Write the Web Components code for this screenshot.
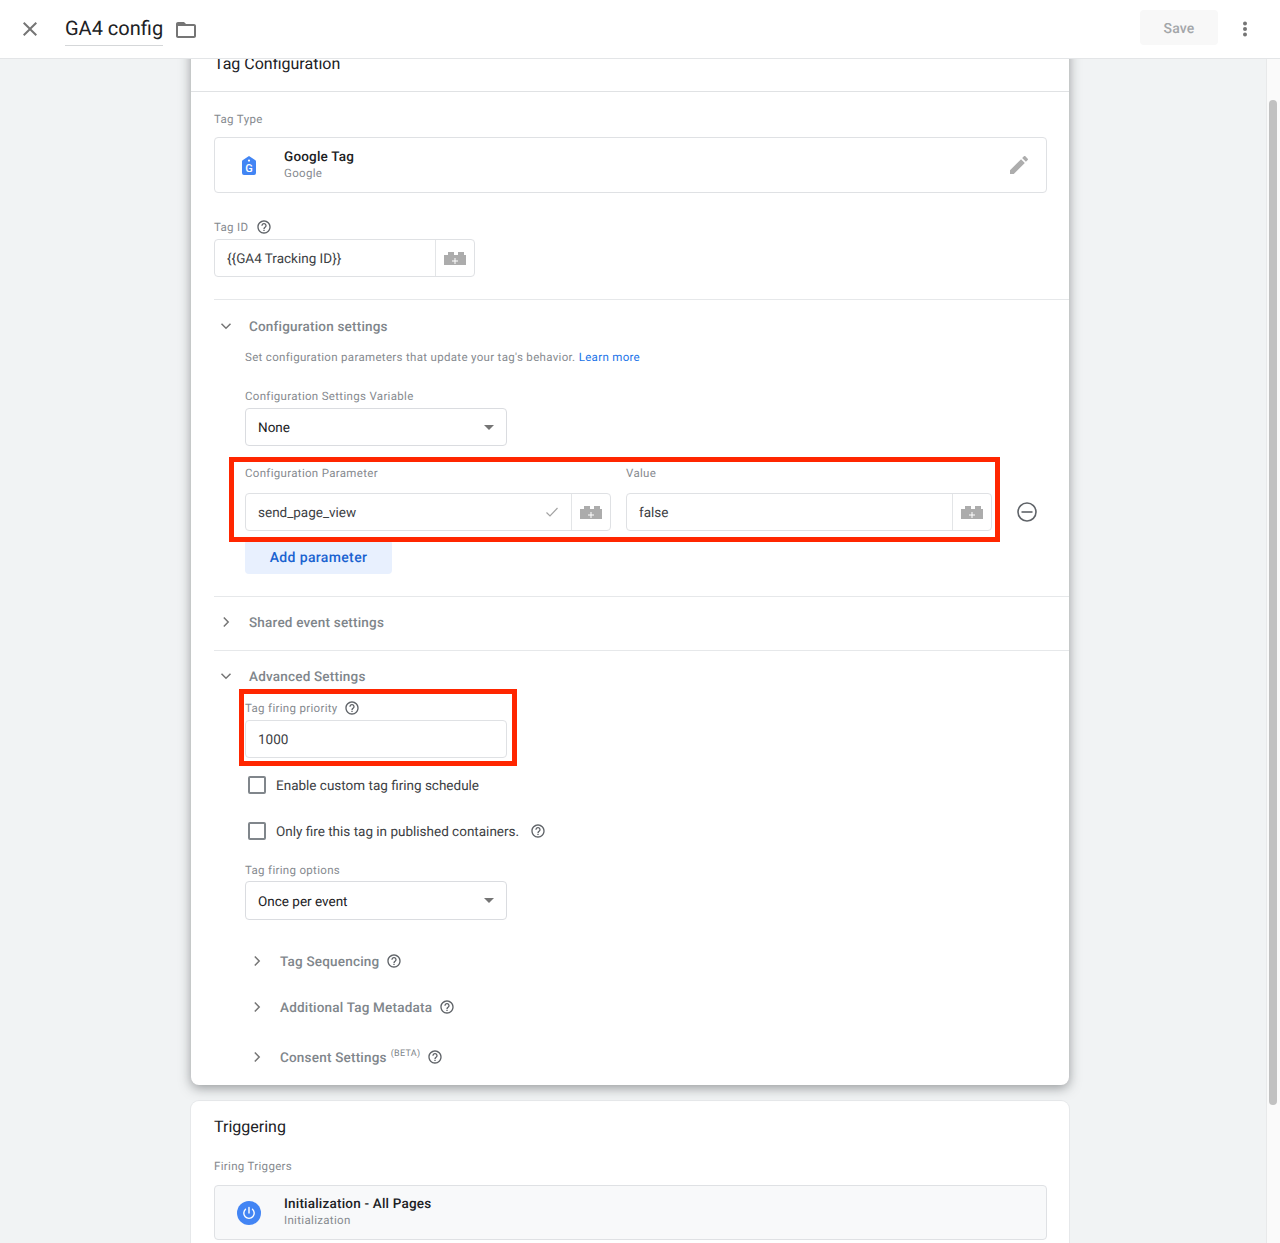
<!DOCTYPE html>
<html lang="en">
<head>
<meta charset="utf-8">
<title>GA4 config</title>
<style>
  html, body { margin: 0; height: 100%; overflow: hidden; }
  body { font-family: Roboto, "Liberation Sans", sans-serif; color: #202124; background: #f1f3f4; text-rendering: geometricPrecision; }
</style>
</head>
<body>
<gtm-app></gtm-app>
<script>
const icons = {
  close: `<svg width="24" height="24" viewBox="0 0 24 24" fill="#757575"><path d="M19 6.41L17.59 5 12 10.59 6.41 5 5 6.41 10.59 12 5 17.59 6.41 19 12 13.41 17.59 19 19 17.59 13.41 12z"/></svg>`,
  folder: `<svg width="24" height="24" viewBox="0 0 24 24" fill="#757575"><path d="M20 6h-8l-2-2H4c-1.1 0-2 .9-2 2v12c0 1.1.9 2 2 2h16c1.1 0 2-.9 2-2V8c0-1.1-.9-2-2-2zm0 12H4V8h16v10z"/></svg>`,
  more: `<svg width="24" height="24" viewBox="0 0 24 24" fill="#757575"><circle cx="12" cy="6.500" r="2"/><circle cx="12" cy="12" r="2"/><circle cx="12" cy="17.500" r="2"/></svg>`,
  pencil: `<svg width="24" height="24" viewBox="0 0 24 24" fill="#adadad"><path d="M3 17.25V21h3.75L17.81 9.94l-3.75-3.75L3 17.25zM20.71 7.04c.39-.39.39-1.02 0-1.41l-2.34-2.34c-.39-.39-1.02-.39-1.41 0l-1.83 1.83 3.75 3.75 1.83-1.83z"/></svg>`,
  help: `<svg width="16" height="16" viewBox="0 0 24 24" fill="#5f6368"><path d="M11 18h2v-2h-2v2zm1-16C6.48 2 2 6.48 2 12s4.48 10 10 10 10-4.48 10-10S17.52 2 12 2zm0 18c-4.41 0-8-3.59-8-8s3.59-8 8-8 8 3.59 8 8-3.59 8-8 8zm0-14c-2.21 0-4 1.79-4 4h2c0-1.1.9-2 2-2s2 .9 2 2c0 2-3 1.75-3 5h2c0-2.25 3-2.5 3-5 0-2.21-1.79-4-4-4z"/></svg>`,
  down: `<svg width="12" height="12" viewBox="0 0 12 12" fill="none" stroke="#757575" stroke-width="1.5"><path d="M1.500 3.800L6 8.200l4.500-4.400"/></svg>`,
  right: `<svg width="12" height="12" viewBox="0 0 12 12" fill="none" stroke="#757575" stroke-width="1.5"><path d="M3.800 1.500L8.200 6l-4.400 4.500"/></svg>`,
  brick: `<svg width="22" height="14" viewBox="0 0 22 14"><path fill="#acacac" d="M0 4h4V1h6v3h4V1h6v3h2v10H0z"/><path fill="#fff" d="M10.500 7h1v2.500H14v1h-2.500V13h-1v-2.500H8v-1h2.500z"/></svg>`,
  check: `<svg width="14" height="14" viewBox="0 0 14 14" fill="none" stroke="#a3a3a3" stroke-width="1.2"><path d="M1.500 7.500l3.500 3.500 7.500-8"/></svg>`,
  minus: `<svg width="22" height="22" viewBox="0 0 22 22" fill="none" stroke="#5f6368" stroke-width="1.6"><circle cx="11" cy="11" r="9"/><path d="M5.500 11h11"/></svg>`,
  googleTag: `<svg width="14" height="19" viewBox="0 0 14 19"><path fill="#4285f4" d="M7 0l6.400 4.300q.6.400.6 1.200V17a2 2 0 0 1-2 2H2a2 2 0 0 1-2-2V5.500q0-.8.6-1.200z"/><circle cx="7" cy="4.600" r="1.100" fill="#fff"/><text x="7" y="16.200" fill="#fff" font-family="Roboto, sans-serif" font-size="11" font-weight="500" text-anchor="middle">G</text></svg>`,
  power: `<svg width="24" height="24" viewBox="0 0 24 24"><circle cx="12" cy="12" r="12" fill="#4285f4"/><path fill="none" stroke="#fff" stroke-width="1.400" stroke-linecap="round" d="M12 6.500v5.500M8.500 8.300a5.200 5.200 0 1 0 7 0"/></svg>`,
};

const define = (name, html) => {
  const $template = document.createElement("template");
  $template.innerHTML = html;
  window.customElements.define(name, class extends HTMLElement {
    constructor() {
      super();
      this.attachShadow({ mode: "open" });
      this.shadowRoot.appendChild($template.content.cloneNode(true));
    }
  });
};

define("gtm-header", /*html*/ `
  <style>
    :host {
      display: flex;
      align-items: center;
      flex: none;
      height: 58px;
      background: #fff;
      border-bottom: 1px solid #e3e5e7;
      position: relative;
      z-index: 2;
    }
    .close { margin-left: 18px; height: 24px; }
    .title {
      margin-left: 23px;
      font-size: 20px;
      line-height: 26px;
      padding: 2px 0 4px;
      color: #202124;
      border-bottom: 1px solid #d5d7d9;
    }
    .folder { margin-left: 11px; height: 24px; margin-top: 1px; }
    .save {
      margin-left: auto;
      width: 78px;
      height: 35px;
      line-height: 38px;
      margin-top: -3px;
      text-align: center;
      font-size: 14px;
      font-weight: 500;
      letter-spacing: .2px;
      color: #a3a6a9;
      background: #f8f8f8;
      border-radius: 4px;
    }
    .more { margin: -1px 23px 0 15px; height: 24px; }
  </style>
  <span class="close">${icons.close}</span>
  <span class="title">GA4 config</span>
  <span class="folder">${icons.folder}</span>
  <span class="save">Save</span>
  <span class="more">${icons.more}</span>
`);

define("gtm-label", /*html*/ `
  <style>
    :host {
      display: flex;
      align-items: center;
      height: 16px;
      font-size: 11.5px;
      letter-spacing: .32px;
      color: #868a8f;
    }
  </style>
  <slot></slot>
`);

define("gtm-help", /*html*/ `
  <style>
    :host { display: inline-flex; flex: none; }
  </style>
  ${icons.help}
`);

define("gtm-input", /*html*/ `
  <style>
    :host {
      display: flex;
      height: 38px;
      box-sizing: border-box;
      background: #fff;
      border: 1px solid #dfe1e4;
      border-radius: 4px;
      font-size: 13.5px;
      color: #3c4043;
    }
    .value {
      flex: 1;
      display: flex;
      align-items: center;
      justify-content: space-between;
      padding: 2px 12px 0;
    }
    .brick {
      flex: none;
      display: flex;
      align-items: center;
      justify-content: center;
      width: 38px;
      border-left: 1px solid #e3e5e7;
    }
    ::slotted([slot="check"]) { display: flex; margin: -2px 0 0; }
  </style>
  <div class="value"><slot></slot><slot name="check"></slot></div>
  <div class="brick">${icons.brick}</div>
`);

define("gtm-plain-input", /*html*/ `
  <style>
    :host {
      display: flex;
      align-items: center;
      height: 38px;
      box-sizing: border-box;
      padding: 2px 12px 0;
      background: #fff;
      border: 1px solid #dfe1e4;
      border-radius: 4px;
      font-size: 13.5px;
      color: #3c4043;
    }
  </style>
  <slot></slot>
`);

define("gtm-select", /*html*/ `
  <style>
    :host {
      display: flex;
      align-items: center;
      justify-content: space-between;
      height: 38px;
      box-sizing: border-box;
      padding: 2px 12px 0;
      background: #fff;
      border: 1px solid #dadce0;
      border-radius: 4px;
      font-size: 13.5px;
      color: #202124;
    }
    i {
      width: 0;
      height: 0;
      margin-top: -2px;
      border: 5px solid transparent;
      border-top-color: #757575;
      border-bottom: 0;
    }
  </style>
  <slot></slot><i></i>
`);

define("gtm-chip", /*html*/ `
  <style>
    :host {
      display: flex;
      align-items: center;
      height: 56px;
      box-sizing: border-box;
      background: #fff;
      border: 1px solid #dfe1e4;
      border-radius: 4px;
    }
    :host([muted]) { height: 55px; background: #f8f9fa; }
    .icon { flex: none; display: flex; justify-content: center; width: 68px; margin-right: 1px; }
    .text { flex: 1; margin-top: -2px; }
    :host([muted]) .text { margin-top: -3px; }
    .name { display: block; font-size: 13.5px; font-weight: 500; line-height: 18px; letter-spacing: .2px; color: #202124; }
    .type { display: block; font-size: 11.5px; line-height: 15px; letter-spacing: .32px; color: #868a8f; }
    .edit { display: flex; margin-right: 15px; }
  </style>
  <span class="icon"><slot name="icon"></slot></span>
  <div class="text">
    <span class="name"><slot name="name"></slot></span>
    <span class="type"><slot name="type"></slot></span>
  </div>
  <span class="edit"><slot name="edit"></slot></span>
`);

define("gtm-section-head", /*html*/ `
  <style>
    :host {
      display: flex;
      align-items: center;
      box-sizing: border-box;
      height: 20px;
      padding-top: 2px;
      font-size: 13.5px;
      font-weight: 500;
      letter-spacing: .2px;
      color: #80868b;
    }
    .arrow { display: flex; width: 24px; justify-content: center; margin: -2px 11px 0 0; }
    ::slotted(gtm-help) { margin: -2px 0 0 7px; }
    ::slotted(sup) { font-size: 9px; font-weight: 400; line-height: 0; margin: -8px 0 0 4px; letter-spacing: .3px; }
  </style>
  <span class="arrow"><slot name="arrow"></slot></span>
  <slot></slot>
`);

define("gtm-checkbox", /*html*/ `
  <style>
    :host {
      display: flex;
      align-items: center;
      box-sizing: border-box;
      height: 24px;
      padding-top: 2px;
      font-size: 13.5px;
      color: #3c4043;
    }
    i {
      flex: none;
      width: 14px;
      height: 14px;
      margin: -2px 10px 0 3px;
      border: 2px solid #80868b;
      border-radius: 2px;
    }
    ::slotted(gtm-help) { margin: -2px 0 0 11px; }
  </style>
  <i></i><slot></slot>
`);

define("gtm-callout", /*html*/ `
  <style>
    :host {
      display: block;
      position: absolute;
      border: 5px solid #ff2600;
      pointer-events: none;
    }
  </style>
`);

define("tag-card", /*html*/ `
  <style>
    :host {
      display: block;
      width: 878px;
      margin-top: -31px;
      padding-bottom: 18px;
      background: #fff;
      border-radius: 0 0 8px 8px;
      box-shadow: 0 3px 12px rgba(60, 64, 67, .5);
      position: relative;
    }
    .title {
      height: 39px;
      padding: 24px 0 0 23px;
      font-size: 16px;
      line-height: 24px;
      color: #202124;
      border-bottom: 1px solid #e0e2e4;
    }
    .pad { padding: 0 22px 0 23px; }
    .line { height: 1px; margin-left: 23px; background: #e6e8ea; }
    .indent { margin-left: 31px; }
    .w261 { width: 261px; }
    .desc { font-size: 11.5px; line-height: 16px; letter-spacing: .32px; color: #868a8f; }
    .desc a { color: #1a73e8; text-decoration: none; }
    .params { display: flex; align-items: center; }
    .params-box { position: relative; display: flex; gap: 15px; width: 747px; }
    .param { flex: 1; min-width: 0; }
    .minus { display: flex; margin: 27px 0 0 24px; }
    .add {
      width: 147px;
      height: 34px;
      line-height: 36px;
      text-align: center;
      font-size: 14px;
      font-weight: 500;
      letter-spacing: .35px;
      color: #1a62d0;
      background: #e8f0fe;
      border-radius: 4px;
    }
    .prio { position: relative; width: 262px; }
    gtm-label gtm-help { margin-left: 8px; }
    .prio gtm-label gtm-help { margin-left: 6px; }
  </style>
  <div class="title">Tag Configuration</div>

  <div class="pad">
    <gtm-label style="margin-top:19px">Tag Type</gtm-label>
    <gtm-chip style="margin-top:10px">
      <span slot="icon" style="display:flex">${icons.googleTag}</span>
      <span slot="name">Google Tag</span>
      <span slot="type">Google</span>
      <span slot="edit" style="display:flex">${icons.pencil}</span>
    </gtm-chip>
    <gtm-label style="margin-top:26px">Tag ID <gtm-help></gtm-help></gtm-label>
    <gtm-input class="w261" style="margin-top:4px">{{GA4 Tracking ID}}</gtm-input>
  </div>

  <div class="line" style="margin-top:22px"></div>

  <gtm-section-head style="margin:16px 0 0 23px"><span slot="arrow" style="display:flex">${icons.down}</span>Configuration settings</gtm-section-head>
  <div class="pad">
    <div class="indent">
      <div class="desc" style="margin-top:13px">Set configuration parameters that update your tag's behavior. <a>Learn more</a></div>
      <gtm-label style="margin-top:23px">Configuration Settings Variable</gtm-label>
      <gtm-select class="w261" style="margin-top:4px;width:262px">None</gtm-select>

      <div class="params" style="margin-top:19px">
        <div class="params-box">
          <div class="param">
            <gtm-label>Configuration Parameter</gtm-label>
            <gtm-input style="margin-top:12px">send_page_view<span slot="check">${icons.check}</span></gtm-input>
          </div>
          <div class="param">
            <gtm-label>Value</gtm-label>
            <gtm-input style="margin-top:12px">false</gtm-input>
          </div>
          <gtm-callout style="top:-8px;left:-16px;right:-8px;bottom:-11px"></gtm-callout>
        </div>
        <span class="minus">${icons.minus}</span>
      </div>
      <div class="add" style="margin-top:9px">Add parameter</div>
    </div>
  </div>

  <div class="line" style="margin-top:22px"></div>
  <gtm-section-head style="margin:15px 0 0 23px"><span slot="arrow" style="display:flex">${icons.right}</span>Shared event settings</gtm-section-head>
  <div class="line" style="margin-top:18px"></div>
  <gtm-section-head style="margin:15px 0 0 23px"><span slot="arrow" style="display:flex">${icons.down}</span>Advanced Settings</gtm-section-head>

  <div class="pad">
    <div class="indent">
      <div class="prio" style="margin-top:14px">
        <gtm-label>Tag firing priority <gtm-help></gtm-help></gtm-label>
        <gtm-plain-input style="margin-top:4px">1000</gtm-plain-input>
        <gtm-callout style="top:-11px;left:-6px;right:-10px;bottom:-8px"></gtm-callout>
      </div>
      <gtm-checkbox style="margin-top:15px">Enable custom tag firing schedule</gtm-checkbox>
      <gtm-checkbox style="margin-top:22px">Only fire this tag in published containers. <gtm-help></gtm-help></gtm-checkbox>
      <gtm-label style="margin-top:19px">Tag firing options</gtm-label>
      <gtm-select style="margin-top:3px;width:262px;height:39px">Once per event</gtm-select>
    </div>
  </div>

  <gtm-section-head style="margin:31px 0 0 31px;padding-left:23px"><span slot="arrow" style="display:flex">${icons.right}</span>Tag Sequencing <gtm-help></gtm-help></gtm-section-head>
  <gtm-section-head style="margin:26px 0 0 31px;padding-left:23px"><span slot="arrow" style="display:flex">${icons.right}</span>Additional Tag Metadata <gtm-help></gtm-help></gtm-section-head>
  <gtm-section-head style="margin:30px 0 0 31px;padding-left:23px"><span slot="arrow" style="display:flex">${icons.right}</span>Consent Settings <sup>(BETA)</sup> <gtm-help></gtm-help></gtm-section-head>
`);

define("trigger-card", /*html*/ `
  <style>
    :host {
      display: block;
      box-sizing: border-box;
      width: 878px;
      margin-top: 16px;
      padding: 14px 22px 24px 23px;
      background: #fff;
      border-radius: 8px 8px 0 0;
      box-shadow: 0 0 0 1px #e6e8ea;
    }
    .title { font-size: 16px; line-height: 24px; color: #202124; }
  </style>
  <div class="title">Triggering</div>
  <gtm-label style="margin-top:19px">Firing Triggers</gtm-label>
  <gtm-chip muted style="margin-top:11px">
    <span slot="icon" style="display:flex">${icons.power}</span>
    <span slot="name">Initialization - All Pages</span>
    <span slot="type">Initialization</span>
  </gtm-chip>
`);

define("gtm-scrollbar", /*html*/ `
  <style>
    :host {
      display: block;
      flex: none;
      width: 13px;
      padding-top: 41px;
      background: #fafafa;
      border-left: 1px solid #e8e9ea;
    }
    i {
      display: block;
      width: 8px;
      height: 1005px;
      margin-left: 2px;
      background: #c1c1c1;
      border-radius: 4px;
    }
  </style>
  <i></i>
`);

define("gtm-app", /*html*/ `
  <style>
    :host {
      display: flex;
      flex-direction: column;
      height: 1243px;
      overflow: hidden;
    }
    .body { flex: 1; display: flex; min-height: 0; }
    .content {
      flex: 1;
      min-width: 0;
      padding-left: 191px;
      overflow: hidden;
      background: #f1f3f4;
    }
  </style>
  <gtm-header></gtm-header>
  <div class="body">
    <div class="content">
      <tag-card></tag-card>
      <trigger-card></trigger-card>
    </div>
    <gtm-scrollbar></gtm-scrollbar>
  </div>
`);
</script>
</body>
</html>
